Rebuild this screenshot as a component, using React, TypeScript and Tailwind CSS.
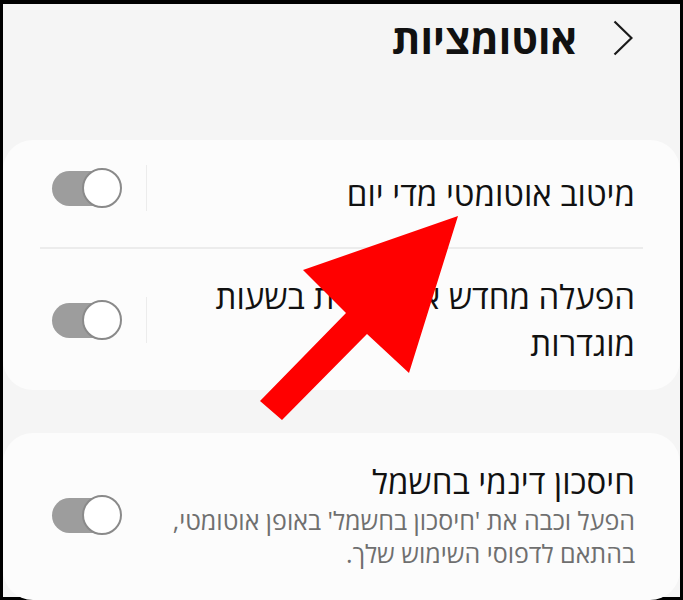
import React from 'react';

function Toggle() {
  return (
    <div className="relative h-[40px] w-[70px] shrink-0">
      <div className="absolute left-0 top-[3px] h-[35px] w-[60px] rounded-full bg-[#9d9d9d]" />
      <div className="absolute right-0 top-0 size-[40px] rounded-full border-2 border-[#8a8a8a] bg-white" />
    </div>
  );
}

function Divider() {
  return <div className="mr-[24px] h-[46px] w-px bg-[#ececec]" />;
}

export default function App() {
  return (
    <div
      dir="rtl"
      className="h-[600px] w-[683px] overflow-hidden bg-black px-[3px] pb-[3px] pt-[4px]"
      style={{ fontFamily: '"Open Sans", "Liberation Sans", sans-serif' }}
    >
      <div className="relative h-full bg-[#f5f5f5]">
        {/* Header */}
        <div className="flex h-[68px] items-center pr-[47px]">
          <svg width="20" height="36" viewBox="0 0 20 36" className="shrink-0">
            <path d="M1.5 1.5 L18.5 18 L1.5 34.5" fill="none" stroke="#1a1a1a" strokeWidth="2.2" />
          </svg>
          <h1 className="mr-[36px] text-[41px] font-bold leading-none text-[#111]">אוטומציות</h1>
        </div>

        {/* Card 1 */}
        <div className="mt-[68px] rounded-[30px] bg-[#fcfcfc]">
          <div className="flex h-[107px] items-center">
            <p className="flex-1 pr-[45px] text-[33px] leading-[47px] text-[#111]">מיטוב אוטומטי מדי יום</p>
            <div className="mb-[12px] flex items-center">
              <Divider />
              <div className="ml-[49px] mr-[24px]">
                <Toggle />
              </div>
            </div>
          </div>
          <div className="mx-[37px] h-[2px] bg-[#ececec]" />
          <div className="flex h-[141px] items-center">
            <div className="flex-1 pr-[45px] text-[33px] leading-[47px] text-[#111]">
              <p>הפעלה מחדש אוטומטית בשעות</p>
              <p>מוגדרות</p>
            </div>
            <Divider />
            <div className="ml-[49px] mr-[24px]">
              <Toggle />
            </div>
          </div>
        </div>

        {/* Card 2 */}
        <div className="mt-[43px] rounded-[30px] bg-[#fcfcfc] pb-[30px] pt-[27px]">
          <div className="flex items-center">
            <div className="flex-1 pr-[45px]">
              <p className="text-[33px] leading-[44px] text-[#111]">חיסכון דינמי בחשמל</p>
              <p className="text-[25px] leading-[33px] text-[#6f6f6f]">הפעל וכבה את 'חיסכון בחשמל' באופן אוטומטי,</p>
              <p className="text-[25px] leading-[33px] text-[#6f6f6f]">בהתאם לדפוסי השימוש שלך.</p>
            </div>
            <div className="ml-[49px] mr-[24px]">
              <Toggle />
            </div>
          </div>
        </div>

        {/* Red arrow overlay */}
        <svg className="pointer-events-none absolute left-0 top-0" width="677" height="593" viewBox="3 4 677 593">
          <polygon
            points="458,216 303,270 346,313 260,401 282,420 367,334 409,373"
            fill="#ff0000"
          />
        </svg>
      </div>
    </div>
  );
}
